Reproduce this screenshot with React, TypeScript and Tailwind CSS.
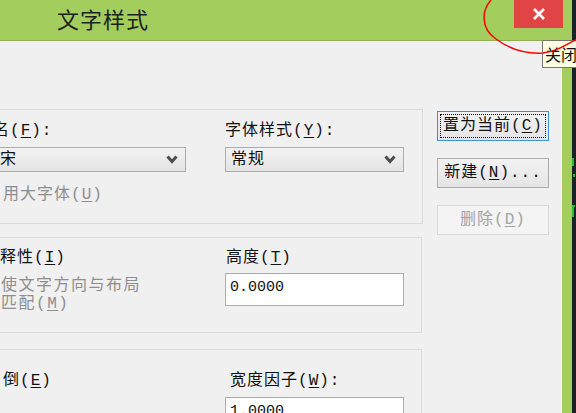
import React from 'react';

const ui = "font-['Liberation_Mono','Noto_Sans_CJK_SC',monospace] text-[16px] leading-[20px] tracking-[1px]";

function Acc({ k }: { k: string }) {
  return (
    <span>
      (<u className="underline-offset-[2px]">{k}</u>)
    </span>
  );
}

function Chevron() {
  return (
    <svg width="12" height="9" viewBox="0 0 12 9" className="shrink-0">
      <polyline points="1.5,1.5 6,6.5 10.5,1.5" fill="none" stroke="#4d4d4d" strokeWidth="3" />
    </svg>
  );
}

function Combo({ text, cut }: { text: string; cut?: boolean }) {
  return (
    <div
      className={`h-[25px] flex items-center justify-between border border-[#acacac] bg-gradient-to-b from-[#f2f2f2] to-[#e4e4e4] pr-[7px] ${
        cut ? 'border-l-0 pl-0' : 'pl-[5px]'
      }`}
    >
      <span className="text-[#111]">{text}</span>
      <Chevron />
    </div>
  );
}

function Field({ value }: { value: string }) {
  return (
    <div className="h-[33px] border border-[#adadad] bg-white px-[4px] pt-[3px]">
      <span className="font-['Liberation_Mono',monospace] text-[15px] tracking-normal text-[#111]">{value}</span>
    </div>
  );
}

function Btn({ children, focus, disabled }: { children: React.ReactNode; focus?: boolean; disabled?: boolean }) {
  return (
    <div
      className={`w-[112px] h-[30px] flex items-center justify-center border ${
        focus
          ? 'border-[#3c8fe0] bg-gradient-to-b from-[#f2f2f2] to-[#e5e5e5] p-[2px]'
          : disabled
          ? 'border-[#d9d9d9] bg-[#f4f4f4] text-[#a3a3a3]'
          : 'border-[#acacac] bg-gradient-to-b from-[#f2f2f2] to-[#e5e5e5]'
      }`}
    >
      {focus ? (
        <div className="w-full h-full border border-dotted border-black flex items-center justify-center">{children}</div>
      ) : (
        children
      )}
    </div>
  );
}

export default function App() {
  return (
    <div className={`relative w-[576px] h-[413px] overflow-hidden flex bg-[#1c2128] text-[#111] ${ui}`}>
      <div className="w-[572px] h-full flex flex-col bg-[#a3cd5d] shrink-0">
        {/* title bar */}
        <div className="h-[40px] shrink-0 flex items-start border-b border-[#8db04c] box-content">
          <span className="pl-[57px] pt-[3px] font-['Noto_Sans_CJK_SC',sans-serif] text-[22px] leading-[30px] tracking-[1px] text-[#1e1e1e]">
            文字样式
          </span>
          <div className="ml-auto mr-[9px] w-[49px] h-[28px] bg-[#e04444] flex items-center justify-center">
            <svg width="14" height="14" viewBox="0 0 14 14">
              <path d="M2 2 L12 12 M12 2 L2 12" stroke="#fff" strokeWidth="2.6" />
            </svg>
          </div>
        </div>

        {/* body */}
        <div className="flex-1 mr-[10px] bg-[#f0f0f0] flex">
          <div className="w-[423px] shrink-0 flex flex-col pt-[68px]">
            {/* font group */}
            <div className="h-[115px] border border-l-0 border-[#dadada] flex pt-[11px]">
              <div className="w-[186px] flex flex-col">
                <span className="-ml-[7px]">
                  名<Acc k="F" />:
                </span>
                <div className="mt-[6px]">
                  <Combo text="宋" cut />
                </div>
                <span className="mt-[13px] ml-[3px] text-[#8e8e8e]">
                  用大字体<Acc k="U" />
                </span>
              </div>
              <div className="w-[179px] ml-[39px] flex flex-col">
                <span>
                  字体样式<Acc k="Y" />:
                </span>
                <div className="mt-[6px]">
                  <Combo text="常规" />
                </div>
              </div>
            </div>

            {/* size group */}
            <div className="w-[422px] mt-[13px] h-[96px] border border-l-0 border-[#dadada] flex pt-[10px]">
              <div className="w-[186px] flex flex-col">
                <span>
                  释性<Acc k="I" />
                </span>
                <div className="mt-[9px] ml-[1px] text-[#8e8e8e] leading-[18px] tracking-[1.5px]">
                  <div>使文字方向与布局</div>
                  <div>
                    匹配<Acc k="M" />
                  </div>
                </div>
              </div>
              <div className="w-[179px] ml-[39px] flex flex-col">
                <span className="ml-[1px]">
                  高度<Acc k="T" />
                </span>
                <div className="mt-[5px]">
                  <Field value="0.0000" />
                </div>
              </div>
            </div>

            {/* effects group */}
            <div className="w-[422px] mt-[16px] flex-1 border border-l-0 border-b-0 border-[#dadada] flex pt-[21px]">
              <div className="w-[186px] flex flex-col">
                <span className="ml-[3px]">
                  倒<Acc k="E" />
                </span>
              </div>
              <div className="w-[179px] ml-[39px] flex flex-col">
                <span className="ml-[5px]">
                  宽度因子<Acc k="W" />:
                </span>
                <div className="mt-[6px]">
                  <Field value="1.0000" />
                </div>
              </div>
            </div>
          </div>

          {/* buttons */}
          <div className="ml-[14px] flex flex-col pt-[70px] gap-[17px]">
            <Btn focus>
              置为当前<Acc k="C" />
            </Btn>
            <Btn>
              新建<Acc k="N" />...
            </Btn>
            <Btn disabled>
              删除<Acc k="D" />
            </Btn>
          </div>
        </div>
      </div>

      {/* command line fragments behind the window */}
      <div className="w-[4px] h-full relative">
        <div className="absolute left-0 top-[158px] w-[2px] h-[8px] border-l-2 border-t-2 border-[#22c02a]" />
        <div className="absolute left-[1px] top-[174px] w-[2px] h-[3px] bg-[#22c02a]" />
        <div className="absolute left-0 top-[205px] w-[3px] h-[12px] border-l-2 border-t-2 border-[#22c02a]" />
      </div>

      {/* tooltip */}
      <div className="absolute left-[542px] top-[40px] w-[60px] h-[28px] border border-[#767676] bg-[#ffffe1] pl-[2px] pt-[3px] tracking-normal font-['Noto_Sans_CJK_SC',sans-serif] text-[16px] leading-[20px] text-[#111]">
        关闭
      </div>

      {/* red annotation */}
      <svg className="absolute left-0 top-0 pointer-events-none" width="576" height="413">
        <path
          d="M491 0 C482 10, 480 28, 496 39 C508 48, 525 54, 543 53 C555 52, 566 45, 577 39"
          fill="none"
          stroke="#ff0000"
          strokeWidth="1.5"
        />
      </svg>
    </div>
  );
}
